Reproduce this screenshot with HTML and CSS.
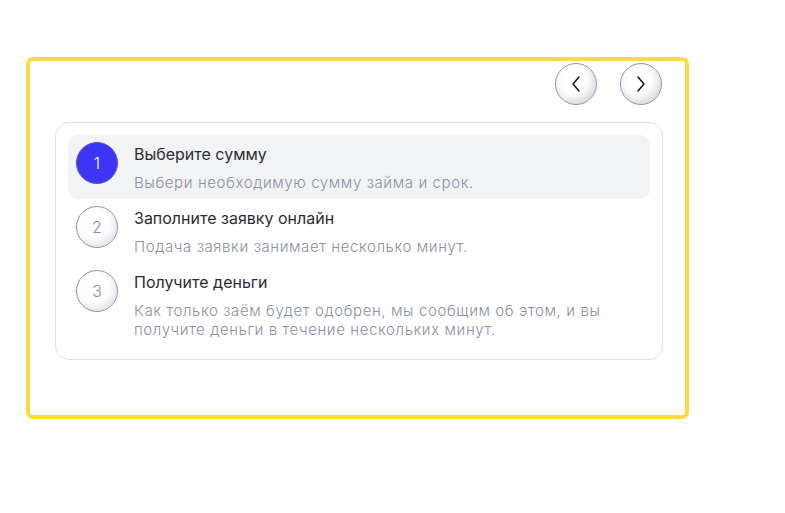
FILE: index.html
```html
<!DOCTYPE html>
<html lang="ru">
<head>
<meta charset="utf-8">
<link rel="stylesheet" href="styles.css">
</head>
<body>
<div class="frame">
  <div class="nav">
    <button class="nav-btn" aria-label="Назад">
      <svg width="14" height="18" viewBox="0 0 14 18"><path d="M10 2 L4 9 L10 16" fill="none" stroke="#111" stroke-width="1.5" stroke-linecap="round" stroke-linejoin="round"/></svg>
    </button>
    <button class="nav-btn" aria-label="Вперёд">
      <svg width="14" height="18" viewBox="0 0 14 18"><path d="M4 2 L10 9 L4 16" fill="none" stroke="#111" stroke-width="1.5" stroke-linecap="round" stroke-linejoin="round"/></svg>
    </button>
  </div>
  <div class="card">
    <div class="step active">
      <div class="num">1</div>
      <div class="text">
        <div class="title">Выберите сумму</div>
        <div class="desc">Выбери необходимую сумму займа и срок.</div>
      </div>
    </div>
    <div class="step">
      <div class="num">2</div>
      <div class="text">
        <div class="title">Заполните заявку онлайн</div>
        <div class="desc">Подача заявки занимает несколько минут.</div>
      </div>
    </div>
    <div class="step">
      <div class="num">3</div>
      <div class="text">
        <div class="title">Получите деньги</div>
        <div class="desc">Как только заём будет одобрен, мы сообщим об этом, и вы<br>получите деньги в течение нескольких минут.</div>
      </div>
    </div>
  </div>
</div>
</body>
</html>
```
FILE: styles.css
```css
* { box-sizing: border-box; }
body {
  margin: 0;
  background: #fff;
  font-family: Inter, "Noto Sans", sans-serif;
}
.frame {
  margin: 57px 0 0 26px;
  width: 663px;
  height: 362px;
  border: 4px solid #ffdb40;
  border-radius: 7px;
  padding: 2px 22px 0 25px;
}
.nav {
  display: flex;
  justify-content: flex-end;
  gap: 23px;
  padding-right: 1px;
}
.nav-btn {
  width: 42px;
  height: 42px;
  border-radius: 50%;
  border: 1px solid #8f95aa;
  background: #fff;
  box-shadow: inset -3px -4px 8px rgba(120, 125, 145, 0.3);
  display: flex;
  align-items: center;
  justify-content: center;
  padding: 0;
}
.card {
  margin-top: 17px;
  border: 1px solid #dfe0ea;
  border-radius: 14px;
  padding: 12px 12px 13px;
}
.step {
  display: flex;
  gap: 16px;
  padding: 7px 8px 7px 8px;
  border-radius: 10px;
  min-height: 64px;
}
.step.active { background: #f2f3f5; }
.num {
  flex: none;
  width: 42px;
  height: 42px;
  border-radius: 50%;
  border: 1px solid #8f95aa;
  background: #fff;
  box-shadow: inset -3px -4px 7px rgba(120, 125, 145, 0.2);
  color: #8a8f9f;
  font-size: 16px;
  font-weight: 300;
  display: flex;
  align-items: center;
  justify-content: center;
}
.active .num {
  background: #3d35f5;
  border-color: #5d58b5;
  box-shadow: none;
  color: #fff;
}
.text { padding-top: 1px; }
.title {
  font-size: 16px;
  line-height: 22px;
  font-weight: 400;
  color: #2b2b33;
}
.desc {
  margin-top: 8px;
  font-size: 15px;
  line-height: 19px;
  font-weight: 300;
  letter-spacing: 0.6px;
  color: #8a90a4;
}
```
